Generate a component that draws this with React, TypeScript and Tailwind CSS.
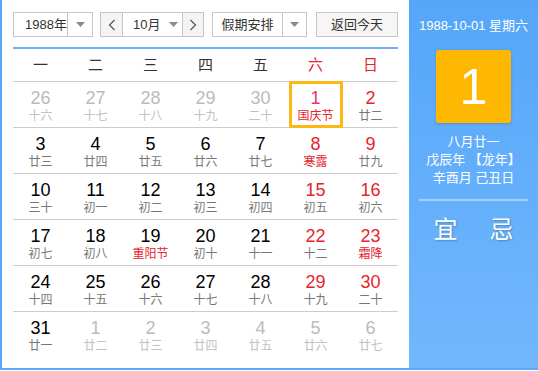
import React from "react";

type Day = { n: number; l: string; other?: boolean; fest?: boolean; sel?: boolean };

const rows: Day[][] = [
  [
    { n: 26, l: "十六", other: true },
    { n: 27, l: "十七", other: true },
    { n: 28, l: "十八", other: true },
    { n: 29, l: "十九", other: true },
    { n: 30, l: "二十", other: true },
    { n: 1, l: "国庆节", fest: true, sel: true },
    { n: 2, l: "廿二" },
  ],
  [
    { n: 3, l: "廿三" },
    { n: 4, l: "廿四" },
    { n: 5, l: "廿五" },
    { n: 6, l: "廿六" },
    { n: 7, l: "廿七" },
    { n: 8, l: "寒露", fest: true },
    { n: 9, l: "廿九" },
  ],
  [
    { n: 10, l: "三十" },
    { n: 11, l: "初一" },
    { n: 12, l: "初二" },
    { n: 13, l: "初三" },
    { n: 14, l: "初四" },
    { n: 15, l: "初五" },
    { n: 16, l: "初六" },
  ],
  [
    { n: 17, l: "初七" },
    { n: 18, l: "初八" },
    { n: 19, l: "重阳节", fest: true },
    { n: 20, l: "初十" },
    { n: 21, l: "十一" },
    { n: 22, l: "十二" },
    { n: 23, l: "霜降", fest: true },
  ],
  [
    { n: 24, l: "十四" },
    { n: 25, l: "十五" },
    { n: 26, l: "十六" },
    { n: 27, l: "十七" },
    { n: 28, l: "十八" },
    { n: 29, l: "十九" },
    { n: 30, l: "二十" },
  ],
  [
    { n: 31, l: "廿一" },
    { n: 1, l: "廿二", other: true },
    { n: 2, l: "廿三", other: true },
    { n: 3, l: "廿四", other: true },
    { n: 4, l: "廿五", other: true },
    { n: 5, l: "廿六", other: true },
    { n: 6, l: "廿七", other: true },
  ],
];

const weekdays = ["一", "二", "三", "四", "五", "六", "日"];

const Caret = () => (
  <svg width="9" height="5" viewBox="0 0 9 5">
    <path d="M0 0 L9 0 L4.5 5 Z" fill="#8a8a8a" />
  </svg>
);

const Chevron = ({ dir }: { dir: "l" | "r" }) => (
  <svg width="8" height="12" viewBox="0 0 8 12">
    <polyline
      points={dir === "l" ? "6.5,1 1.5,6 6.5,11" : "1.5,1 6.5,6 1.5,11"}
      fill="none"
      stroke="#555"
      strokeWidth="1.2"
    />
  </svg>
);

function Cell({ d, col }: { d: Day; col: number }) {
  const weekend = col >= 5;
  let numColor = "text-black";
  if (d.other) numColor = "text-[#bbbbbb]";
  else if (d.sel) numColor = "text-[#e23a5e]";
  else if (weekend) numColor = "text-[#e8232c]";
  let lunarColor = "text-[#777777]";
  if (d.other) lunarColor = "text-[#c2c2c2]";
  else if (d.fest) lunarColor = "text-[#e8232c]";

  return (
    <div className="relative flex flex-col items-center pt-[6px]">
      {d.sel && (
        <div className="absolute left-[1px] right-0 top-[-1px] bottom-[-1px] border-[3px] border-[#fbb814]" />
      )}
      <span className={`text-[18px] leading-[20px] ${numColor}`}>{d.n}</span>
      <span className={`text-[12px] leading-[16px] ${lunarColor}`}>{d.l}</span>
    </div>
  );
}

export default function App() {
  return (
    <div
      className="flex h-[370px] w-[538px] border-b-2 border-l-2 border-[#5aa8f8] bg-white"
      style={{ fontFamily: '"Liberation Sans", "Noto Sans CJK SC", sans-serif' }}
    >
      <div className="w-[407px] px-[11px] pt-[12px]">
        <div className="flex h-[25px] text-[13px] text-[#333]">
          <div className="flex w-[80px] border border-[#c6c6c6]">
            <div className="flex flex-1 items-center pl-[11px]">1988年</div>
            <div className="flex w-[25px] items-center justify-center border-l border-[#c6c6c6]">
              <Caret />
            </div>
          </div>
          <div className="ml-[7px] flex w-[104px] border border-[#c6c6c6]">
            <div className="flex w-[22px] items-center justify-center border-r border-[#c6c6c6] bg-[#f4f4f4]">
              <Chevron dir="l" />
            </div>
            <div className="flex flex-1 items-center pl-[10px]">
              10月
              <span className="ml-[9px] flex">
                <Caret />
              </span>
            </div>
            <div className="flex w-[21px] items-center justify-center border-l border-[#c6c6c6] bg-[#f4f4f4]">
              <Chevron dir="r" />
            </div>
          </div>
          <div className="ml-[8px] flex w-[95px] border border-[#c6c6c6]">
            <div className="flex flex-1 items-center justify-center">假期安排</div>
            <div className="flex w-[24px] items-center justify-center border-l border-[#c6c6c6]">
              <Caret />
            </div>
          </div>
          <div className="ml-[9px] flex w-[82px] items-center justify-center border border-[#c6c6c6] bg-[#f6f6f6]">
            返回今天
          </div>
        </div>

        <div className="mt-[10px] h-[2px] bg-[#6db0f8]" />

        <div className="grid h-[33px] grid-cols-7 border-b border-[#cccccc] text-[15px]">
          {weekdays.map((w, i) => (
            <div
              key={w}
              className={`flex items-center justify-center ${i >= 5 ? "text-[#e8232c]" : "text-[#333]"}`}
            >
              {w}
            </div>
          ))}
        </div>

        {rows.map((r, ri) => (
          <div
            key={ri}
            className={`grid h-[46px] grid-cols-7 ${ri < rows.length - 1 ? "border-b border-[#cccccc]" : ""}`}
          >
            {r.map((d, ci) => (
              <Cell key={ci} d={d} col={ci} />
            ))}
          </div>
        ))}
      </div>

      <div className="flex flex-1 flex-col items-center bg-gradient-to-b from-[#55a6f9] to-[#71b8fd] pt-[17px] text-white">
        <div className="text-[13px] leading-[18px]">1988-10-01 星期六</div>
        <div className="mt-[15px] flex h-[73px] w-[75px] items-center justify-center rounded-[3px] bg-[#feb801] text-[50px] leading-none shadow-[0_1px_3px_rgba(0,0,0,0.15)]">
          1
        </div>
        <div className="mt-[10px] flex flex-col items-center text-[13px] leading-[18px]">
          <span>八月廿一</span>
          <span>戊辰年 【龙年】</span>
          <span>辛酉月 己丑日</span>
        </div>
        <div className="mt-[12px] h-[2px] w-[109px] bg-white/40" />
        <div className="mt-[14px] flex gap-[32px] text-[24px] leading-[30px] [text-shadow:1px_1px_2px_rgba(0,0,0,0.25)]">
          <span>宜</span>
          <span>忌</span>
        </div>
      </div>
    </div>
  );
}
